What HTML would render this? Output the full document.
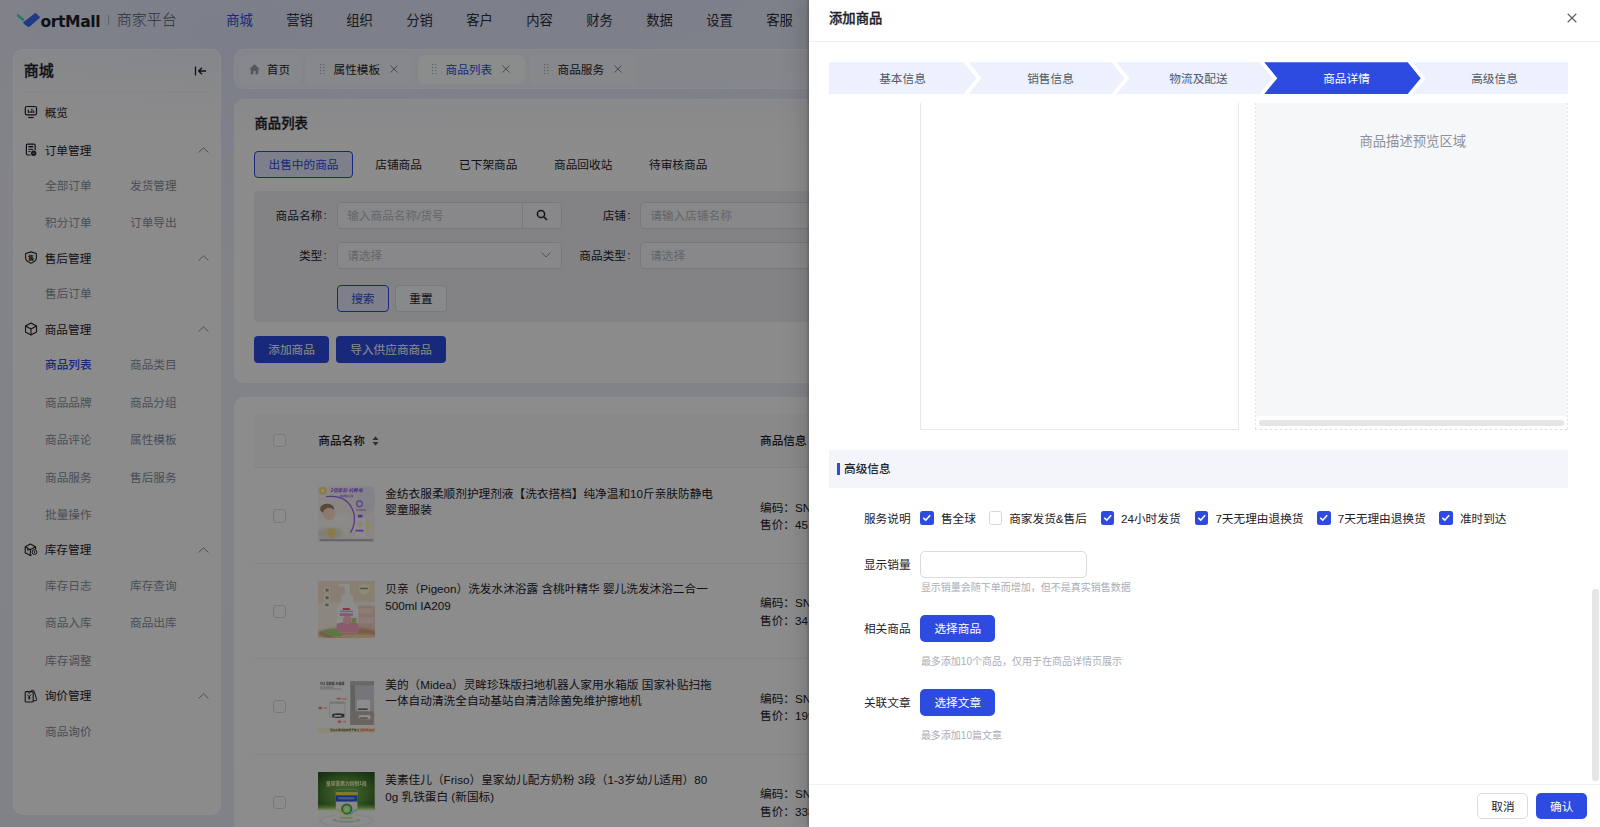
<!DOCTYPE html>
<html lang="zh-CN">
<head>
<meta charset="utf-8">
<title>添加商品</title>
<style>
*{box-sizing:border-box;margin:0;padding:0}
html,body{width:1600px;height:827px;overflow:hidden}
body{font-family:"Liberation Sans","Noto Sans CJK SC",sans-serif;font-size:11.67px;color:#1d2129;background:#eef0f9;position:relative}
.a{position:absolute}
.t{position:absolute;white-space:nowrap;font-size:11.67px;line-height:20px;color:#1d2129}
.app{position:absolute;left:0;top:0;width:1600px;height:827px;overflow:hidden;background:radial-gradient(ellipse 640px 160px at 540px 0px,rgba(224,230,252,.85) 0,rgba(224,230,252,.55) 55%,rgba(224,230,252,0) 100%),radial-gradient(ellipse 260px 220px at 225px 60px,rgba(226,230,252,.9) 0,rgba(226,230,252,0) 100%),linear-gradient(180deg,#eef0f9 0,#ecedf6 100%)}
.card{position:absolute;background:linear-gradient(180deg,rgba(255,255,255,.55) 0,rgba(255,255,255,.97) 85px);box-shadow:inset 0 0 0 1px rgba(255,255,255,.9);border-radius:10px}
.mh{font-weight:400}
.mi{color:#86909c}
.mi.on{color:#2d4be0;font-weight:500}
.tab{position:absolute;border-radius:6px;background:rgba(255,255,255,.35)}
.tab.on{background:rgba(255,255,255,.92)}
.inp{position:absolute;height:26.7px;border:1px solid #d9dce3;border-radius:4px;background:rgba(255,255,255,.55)}
.ph{color:#b4b9c3}
.btn{position:absolute;height:26.7px;border-radius:4px}
.btn.pri{background:#2d4be0}
.btn.gho{background:#e3e8fb;border:1px solid #2d4be0}
.btn.def{background:rgba(255,255,255,.6);border:1px solid #d9dce3}
.cb{position:absolute;width:13.3px;height:13.3px;border:1px solid #d9d9d9;border-radius:3.3px;background:#fff}
.rowline{position:absolute;left:254.4px;width:1340px;height:1px;background:#f0f0f0}
.pimg{position:absolute;left:318px;width:56.7px;height:56.7px;overflow:hidden}
.mask{position:absolute;left:0;top:0;width:1600px;height:827px;background:rgba(0,0,0,.45)}
.drawer{position:absolute;left:808.67px;top:0;width:791.33px;height:827px;background:#fff;box-shadow:-5px 0 13px rgba(0,0,0,.08),-2.5px 0 5px -3.3px rgba(0,0,0,.12),-7.5px 0 23px 6.7px rgba(0,0,0,.05),-2px 0 1.2px rgba(0,0,0,.1)}
.step{position:absolute;top:62.3px;height:31.7px;background:#edf0fd}
.step.on{background:#2d4be0}
.ck{position:absolute;width:13.33px;height:13.33px;border-radius:2.5px;background:#2d4be0}
.ck.off{background:#fff;border:1px solid #d3d6dd}
.ck svg{position:absolute;left:0;top:0}
.help{color:#a9aeb8;font-size:10px}
.dbtn{position:absolute;border-radius:5px;background:#2d4be0}
</style>
</head>
<body>
<div class="app">
<svg class="a" style="left:17.00px;top:10.00px" width="26" height="20" viewBox="0 0 26 20"><path d="M0.9 5.5L5.9 9.5" stroke="#48dcc6" stroke-width="2.6" stroke-linecap="round" fill="none"/><path d="M18.4 3.9L22.0 7.4L12.2 15.8Q11.6 16.2 10.9 15.8L7.2 12.7Z" fill="#3a6af5" stroke="#3a6af5" stroke-width="1.9" stroke-linejoin="round"/></svg>
<div class="t" style="top:11.10px;left:40.60px;line-height:22px;font-size:15.6px;font-weight:bold;font-family:'DejaVu Sans','Liberation Sans',sans-serif;letter-spacing:-0.45px;">ortMall</div>
<div class="a" style="left:108.00px;top:15.00px;width:1.00px;height:10.00px;background:#b0b5c0;"></div>
<div class="t" style="top:9.40px;left:116.70px;line-height:22px;font-size:15px;color:#4e5969;font-weight:300;">商家平台</div>
<div class="t" style="top:11.30px;left:209.50px;width:60.00px;text-align:center;font-size:13.33px;color:#2d4be0;">商城</div>
<div class="t" style="top:11.30px;left:269.50px;width:60.00px;text-align:center;font-size:13.33px;color:#2a2e37;">营销</div>
<div class="t" style="top:11.30px;left:329.50px;width:60.00px;text-align:center;font-size:13.33px;color:#2a2e37;">组织</div>
<div class="t" style="top:11.30px;left:389.50px;width:60.00px;text-align:center;font-size:13.33px;color:#2a2e37;">分销</div>
<div class="t" style="top:11.30px;left:449.50px;width:60.00px;text-align:center;font-size:13.33px;color:#2a2e37;">客户</div>
<div class="t" style="top:11.30px;left:509.50px;width:60.00px;text-align:center;font-size:13.33px;color:#2a2e37;">内容</div>
<div class="t" style="top:11.30px;left:569.50px;width:60.00px;text-align:center;font-size:13.33px;color:#2a2e37;">财务</div>
<div class="t" style="top:11.30px;left:629.50px;width:60.00px;text-align:center;font-size:13.33px;color:#2a2e37;">数据</div>
<div class="t" style="top:11.30px;left:689.50px;width:60.00px;text-align:center;font-size:13.33px;color:#2a2e37;">设置</div>
<div class="t" style="top:11.30px;left:749.50px;width:60.00px;text-align:center;font-size:13.33px;color:#2a2e37;">客服</div>
<div class="card" style="left:13.00px;top:49.00px;width:207.80px;height:766.00px;"></div>
<div class="t" style="top:59.80px;left:23.70px;line-height:22px;font-size:15px;font-weight:500;-webkit-text-stroke:0.3px currentColor;">商城</div>
<svg class="a" style="left:194.00px;top:64.50px" width="13" height="12" viewBox="0 0 13 12"><path d="M1.5 1.5V10.5" stroke="#1d2129" stroke-width="1.3" fill="none"/><path d="M12 6H5M8 2.8L4.6 6L8 9.2" stroke="#1d2129" stroke-width="1.3" fill="none" stroke-linejoin="round"/></svg>
<div class="a" style="left:22.00px;top:90.60px;width:190.00px;height:1.00px;background:rgba(0,0,0,.03);"></div>
<svg class="a" style="left:24.00px;top:105.30px" width="14" height="14" viewBox="0 0 14 14"><rect x="1.3" y="1.5" width="11.2" height="8.3" rx="1.6" fill="none" stroke="#1d2129" stroke-width="1.2"/><path d="M4.3 8V4.8M6.1 8V6.2M7.9 8V3.6M9.7 8V5.4" stroke="#1d2129" stroke-width="1.1" fill="none"/><path d="M4.3 12.5H9.7" stroke="#1d2129" stroke-width="1.2" fill="none"/></svg>
<div class="t mh" style="top:102.60px;left:44.70px;">概览</div>
<svg class="a" style="left:24.00px;top:143.20px" width="14" height="14" viewBox="0 0 14 14"><path d="M11.2 7V2.4Q11.2 1.2 10 1.2H3.6Q2.4 1.2 2.4 2.4V10.8Q2.4 12 3.6 12H6.6" fill="none" stroke="#1d2129" stroke-width="1.2"/><path d="M4.4 3.7H9.3" stroke="#1d2129" stroke-width="1.5"/><path d="M4.4 6.4H9.3M4.4 8.6H6.6" stroke="#1d2129" stroke-width="1"/><circle cx="9.7" cy="10.2" r="2.7" fill="#2a2e36"/><path d="M8.5 10.2H10.9" stroke="#b9bcc4" stroke-width="0.7"/></svg>
<div class="t mh" style="top:140.50px;left:44.70px;">订单管理</div>
<svg class="a" style="left:198.30px;top:147.20px" width="11" height="6" viewBox="0 0 11 6"><path d="M0.6 5.5L5.5 0.8L10.4 5.5" fill="none" stroke="#86909c" stroke-width="1"/></svg>
<div class="t mi" style="top:175.70px;left:45.00px;">全部订单</div>
<div class="t mi" style="top:175.70px;left:130.00px;">发货管理</div>
<div class="t mi" style="top:213.20px;left:45.00px;">积分订单</div>
<div class="t mi" style="top:213.20px;left:130.00px;">订单导出</div>
<svg class="a" style="left:24.00px;top:251.40px" width="14" height="14" viewBox="0 0 14 14"><path d="M7 0.9L12.4 2.5V7Q12.4 10.2 7 12.2Q1.6 10.2 1.6 7V2.5Z" fill="none" stroke="#1d2129" stroke-width="1.1" stroke-linejoin="round"/><text x="7" y="8.6" text-anchor="middle" font-size="6.2" font-weight="bold" fill="#1d2129" font-family="'Liberation Sans','Noto Sans CJK SC',sans-serif">售</text></svg>
<div class="t mh" style="top:248.70px;left:44.70px;">售后管理</div>
<svg class="a" style="left:198.30px;top:255.40px" width="11" height="6" viewBox="0 0 11 6"><path d="M0.6 5.5L5.5 0.8L10.4 5.5" fill="none" stroke="#86909c" stroke-width="1"/></svg>
<div class="t mi" style="top:284.30px;left:45.00px;">售后订单</div>
<svg class="a" style="left:24.00px;top:322.30px" width="14" height="14" viewBox="0 0 14 14"><path d="M7 0.9L12.5 3.9V9.9L7 12.9L1.5 9.9V3.9Z" fill="none" stroke="#1d2129" stroke-width="1.1" stroke-linejoin="round"/><path d="M1.5 3.9L7 6.9L12.5 3.9M7 6.9V12.9" fill="none" stroke="#1d2129" stroke-width="1.1" stroke-linejoin="round"/></svg>
<div class="t mh" style="top:319.60px;left:44.70px;">商品管理</div>
<svg class="a" style="left:198.30px;top:326.30px" width="11" height="6" viewBox="0 0 11 6"><path d="M0.6 5.5L5.5 0.8L10.4 5.5" fill="none" stroke="#86909c" stroke-width="1"/></svg>
<div class="t mi on" style="top:355.00px;left:45.00px;">商品列表</div>
<div class="t mi" style="top:355.00px;left:130.00px;">商品类目</div>
<div class="t mi" style="top:392.50px;left:45.00px;">商品品牌</div>
<div class="t mi" style="top:392.50px;left:130.00px;">商品分组</div>
<div class="t mi" style="top:430.00px;left:45.00px;">商品评论</div>
<div class="t mi" style="top:430.00px;left:130.00px;">属性模板</div>
<div class="t mi" style="top:467.50px;left:45.00px;">商品服务</div>
<div class="t mi" style="top:467.50px;left:130.00px;">售后服务</div>
<div class="t mi" style="top:505.00px;left:45.00px;">批量操作</div>
<svg class="a" style="left:24.00px;top:543.10px" width="14" height="14" viewBox="0 0 14 14"><path d="M11.6 6.2V3.8L6.3 0.9L1.2 3.8V9.7L6.3 12.6L7.6 11.9" fill="none" stroke="#1d2129" stroke-width="1.1" stroke-linejoin="round"/><path d="M1.2 3.8L6.3 6.7L11.6 3.8M6.3 6.7V12.6M3 6.4L4.6 7.3" fill="none" stroke="#1d2129" stroke-width="1.1" stroke-linejoin="round"/><circle cx="10.5" cy="9.1" r="2.4" fill="none" stroke="#1d2129" stroke-width="1"/><path d="M10.5 7.9V10.3" stroke="#1d2129" stroke-width="0.9"/></svg>
<div class="t mh" style="top:540.40px;left:44.70px;">库存管理</div>
<svg class="a" style="left:198.30px;top:547.10px" width="11" height="6" viewBox="0 0 11 6"><path d="M0.6 5.5L5.5 0.8L10.4 5.5" fill="none" stroke="#86909c" stroke-width="1"/></svg>
<div class="t mi" style="top:575.80px;left:45.00px;">库存日志</div>
<div class="t mi" style="top:575.80px;left:130.00px;">库存查询</div>
<div class="t mi" style="top:613.30px;left:45.00px;">商品入库</div>
<div class="t mi" style="top:613.30px;left:130.00px;">商品出库</div>
<div class="t mi" style="top:650.80px;left:45.00px;">库存调整</div>
<svg class="a" style="left:24.00px;top:688.90px" width="14" height="14" viewBox="0 0 14 14"><path d="M2.2 2.6H8.2Q9.2 2.6 9.2 3.6V12Q9.2 13 8.2 13H2.2Q1.2 13 1.2 12V3.6Q1.2 2.6 2.2 2.6Z" fill="none" stroke="#1d2129" stroke-width="1.1"/><path d="M6.6 2.2Q7.4 1 9 1.2Q10 1.4 10.3 2.6L12.7 10.6Q12.9 11.6 11.9 11.7H9.4" fill="none" stroke="#1d2129" stroke-width="1"/><path d="M3.4 5.6L5.2 7.8L7 5.6M5.2 7.8V10.8M3.8 8.9H6.6" fill="none" stroke="#1d2129" stroke-width="1"/><path d="M4 3.6Q5.2 5 6.4 3.6" fill="none" stroke="#1d2129" stroke-width="0.9"/></svg>
<div class="t mh" style="top:686.20px;left:44.70px;">询价管理</div>
<svg class="a" style="left:198.30px;top:692.90px" width="11" height="6" viewBox="0 0 11 6"><path d="M0.6 5.5L5.5 0.8L10.4 5.5" fill="none" stroke="#86909c" stroke-width="1"/></svg>
<div class="t mi" style="top:721.60px;left:45.00px;">商品询价</div>
<div class="card" style="left:233.50px;top:49.00px;width:1353.50px;height:39.80px;background:rgba(255,255,255,.5);box-shadow:inset 0 0 0 1px rgba(255,255,255,.55);"></div>
<div class="tab" style="left:239.00px;top:55.40px;width:62.00px;height:28.20px;"></div>
<svg class="a" style="left:249.30px;top:64.30px" width="11" height="10.5" viewBox="0 0 11 10.5"><path d="M5.5 0.2L0.2 5.2H1.7V10.3H4.4V6.9H6.6V10.3H9.3V5.2H10.8Z" fill="#9a9ea8"/></svg>
<div class="t" style="top:59.80px;left:266.80px;">首页</div>
<div class="tab" style="left:306.00px;top:55.40px;width:106.50px;height:28.20px;"></div>
<svg class="a" style="left:319.70px;top:64.00px" width="5" height="11" viewBox="0 0 5 11"><rect x="0.0" y="0.0" width="1.1" height="1.1" fill="#a0a5b0"/><rect x="3.2" y="0.0" width="1.1" height="1.1" fill="#a0a5b0"/><rect x="0.0" y="3.0" width="1.1" height="1.1" fill="#a0a5b0"/><rect x="3.2" y="3.0" width="1.1" height="1.1" fill="#a0a5b0"/><rect x="0.0" y="6.0" width="1.1" height="1.1" fill="#a0a5b0"/><rect x="3.2" y="6.0" width="1.1" height="1.1" fill="#a0a5b0"/><rect x="0.0" y="9.0" width="1.1" height="1.1" fill="#a0a5b0"/><rect x="3.2" y="9.0" width="1.1" height="1.1" fill="#a0a5b0"/></svg>
<div class="t" style="top:59.80px;left:333.50px;">属性模板</div>
<svg class="a" style="left:390.40px;top:65.30px" width="8" height="8" viewBox="0 0 8 8"><path d="M0.4 0.4L7.6 7.6M7.6 0.4L0.4 7.6" stroke="#7a808c" stroke-width="0.9"/></svg>
<div class="tab on" style="left:418.00px;top:55.40px;width:106.50px;height:28.20px;"></div>
<svg class="a" style="left:431.70px;top:64.00px" width="5" height="11" viewBox="0 0 5 11"><rect x="0.0" y="0.0" width="1.1" height="1.1" fill="#a0a5b0"/><rect x="3.2" y="0.0" width="1.1" height="1.1" fill="#a0a5b0"/><rect x="0.0" y="3.0" width="1.1" height="1.1" fill="#a0a5b0"/><rect x="3.2" y="3.0" width="1.1" height="1.1" fill="#a0a5b0"/><rect x="0.0" y="6.0" width="1.1" height="1.1" fill="#a0a5b0"/><rect x="3.2" y="6.0" width="1.1" height="1.1" fill="#a0a5b0"/><rect x="0.0" y="9.0" width="1.1" height="1.1" fill="#a0a5b0"/><rect x="3.2" y="9.0" width="1.1" height="1.1" fill="#a0a5b0"/></svg>
<div class="t" style="top:59.80px;left:445.50px;color:#2d4be0;">商品列表</div>
<svg class="a" style="left:502.40px;top:65.30px" width="8" height="8" viewBox="0 0 8 8"><path d="M0.4 0.4L7.6 7.6M7.6 0.4L0.4 7.6" stroke="#7a808c" stroke-width="0.9"/></svg>
<div class="tab" style="left:530.00px;top:55.40px;width:106.50px;height:28.20px;"></div>
<svg class="a" style="left:543.70px;top:64.00px" width="5" height="11" viewBox="0 0 5 11"><rect x="0.0" y="0.0" width="1.1" height="1.1" fill="#a0a5b0"/><rect x="3.2" y="0.0" width="1.1" height="1.1" fill="#a0a5b0"/><rect x="0.0" y="3.0" width="1.1" height="1.1" fill="#a0a5b0"/><rect x="3.2" y="3.0" width="1.1" height="1.1" fill="#a0a5b0"/><rect x="0.0" y="6.0" width="1.1" height="1.1" fill="#a0a5b0"/><rect x="3.2" y="6.0" width="1.1" height="1.1" fill="#a0a5b0"/><rect x="0.0" y="9.0" width="1.1" height="1.1" fill="#a0a5b0"/><rect x="3.2" y="9.0" width="1.1" height="1.1" fill="#a0a5b0"/></svg>
<div class="t" style="top:59.80px;left:557.50px;">商品服务</div>
<svg class="a" style="left:614.40px;top:65.30px" width="8" height="8" viewBox="0 0 8 8"><path d="M0.4 0.4L7.6 7.6M7.6 0.4L0.4 7.6" stroke="#7a808c" stroke-width="0.9"/></svg>
<div class="card" style="left:233.50px;top:99.00px;width:1353.50px;height:284.30px;background:linear-gradient(180deg,rgba(255,255,255,.7) 0,rgba(255,255,255,.98) 45px);"></div>
<div class="t" style="top:114.00px;left:254.50px;font-size:13.33px;font-weight:500;-webkit-text-stroke:0.3px currentColor;">商品列表</div>
<div class="a" style="left:254.00px;top:151.00px;width:99.00px;height:26.60px;border:1px solid #2d4be0;border-radius:4px;background:#e3e8fb;"></div>
<div class="t" style="top:154.60px;left:203.50px;width:200.00px;text-align:center;color:#2d4be0;">出售中的商品</div>
<div class="t" style="top:154.60px;left:375.30px;">店铺商品</div>
<div class="t" style="top:154.60px;left:459.10px;">已下架商品</div>
<div class="t" style="top:154.60px;left:554.00px;">商品回收站</div>
<div class="t" style="top:154.60px;left:649.00px;">待审核商品</div>
<div class="a" style="left:254.40px;top:191.00px;width:1340.00px;height:131.30px;background:rgba(232,234,242,.75);border-radius:4px;"></div>
<div class="t" style="top:205.50px;left:127.80px;width:200.00px;text-align:right;">商品名称<span style="display:inline-block;width:5.6px;text-align:center;position:relative;top:-0.5px">:</span></div>
<div class="inp" style="left:337.00px;top:202.00px;width:186.00px;height:26.70px;border-radius:4px 0 0 4px;"></div>
<div class="t ph" style="top:205.50px;left:347.20px;">输入商品名称/货号</div>
<div class="inp" style="left:522.00px;top:202.00px;width:39.60px;height:26.70px;border-radius:0 4px 4px 0;"></div>
<svg class="a" style="left:535.50px;top:208.70px" width="12" height="12" viewBox="0 0 12 12"><circle cx="5" cy="5" r="3.6" fill="none" stroke="#1d2129" stroke-width="1.5"/><path d="M7.8 7.8L11 11" stroke="#1d2129" stroke-width="1.6"/></svg>
<div class="t" style="top:205.50px;left:431.60px;width:200.00px;text-align:right;">店铺<span style="display:inline-block;width:5.6px;text-align:center;position:relative;top:-0.5px">:</span></div>
<div class="inp" style="left:640.40px;top:202.20px;width:400.00px;height:26.50px;"></div>
<div class="t ph" style="top:205.50px;left:650.20px;">请输入店铺名称</div>
<div class="t" style="top:245.50px;left:127.80px;width:200.00px;text-align:right;">类型<span style="display:inline-block;width:5.6px;text-align:center;position:relative;top:-0.5px">:</span></div>
<div class="inp" style="left:337.00px;top:242.00px;width:224.60px;height:26.70px;"></div>
<div class="t ph" style="top:245.50px;left:347.20px;">请选择</div>
<svg class="a" style="left:541.00px;top:252.30px" width="10" height="6" viewBox="0 0 10 6"><path d="M0.7 0.7L5 5L9.3 0.7" fill="none" stroke="#86909c" stroke-width="1"/></svg>
<div class="t" style="top:245.50px;left:431.60px;width:200.00px;text-align:right;">商品类型<span style="display:inline-block;width:5.6px;text-align:center;position:relative;top:-0.5px">:</span></div>
<div class="inp" style="left:640.40px;top:242.20px;width:400.00px;height:26.50px;"></div>
<div class="t ph" style="top:245.50px;left:650.20px;">请选择</div>
<div class="btn gho" style="left:337.00px;top:285.00px;width:51.60px;height:26.70px;"></div>
<div class="t" style="top:288.70px;left:262.80px;width:200.00px;text-align:center;color:#2d4be0;">搜索</div>
<div class="btn def" style="left:395.40px;top:285.00px;width:51.20px;height:26.70px;"></div>
<div class="t" style="top:288.70px;left:321.00px;width:200.00px;text-align:center;">重置</div>
<div class="btn pri" style="left:254.00px;top:336.00px;width:75.30px;height:26.70px;"></div>
<div class="t" style="top:339.70px;left:191.60px;width:200.00px;text-align:center;color:#fff;">添加商品</div>
<div class="btn pri" style="left:336.00px;top:336.00px;width:110.20px;height:26.70px;"></div>
<div class="t" style="top:339.70px;left:291.10px;width:200.00px;text-align:center;color:#fff;">导入供应商商品</div>
<div class="card" style="left:233.50px;top:397.00px;width:1353.50px;height:460.00px;background:rgba(255,255,255,.98);"></div>
<div class="a" style="left:254.40px;top:414.40px;width:1340.00px;height:53.40px;background:#fafafa;border-bottom:1px solid #f0f0f0;"></div>
<div class="cb" style="left:273.00px;top:434.20px;width:13.30px;height:13.30px;"></div>
<div class="t" style="top:431.30px;left:318.30px;font-weight:500;">商品名称</div>
<svg class="a" style="left:372.30px;top:436.30px" width="7" height="10" viewBox="0 0 7 10"><path d="M3.5 0.3L6.6 4H0.4Z" fill="#4e5969"/><path d="M3.5 9.7L6.6 6H0.4Z" fill="#4e5969"/></svg>
<div class="t" style="top:431.30px;left:760.00px;font-weight:500;">商品信息</div>
<div class="cb" style="left:273.00px;top:509.40px;width:13.30px;height:13.30px;"></div>
<div class="pimg" style="top:485.60px"><svg width="56.7" height="56.7" viewBox="0 0 56 56" preserveAspectRatio="none"><defs><filter id="bl" x="-5%" y="-5%" width="110%" height="110%"><feGaussianBlur stdDeviation="0.45"/></filter><filter id="bl2" x="-10%" y="-10%" width="120%" height="120%"><feGaussianBlur stdDeviation="1.2"/></filter></defs><rect width="56" height="56" fill="#f9f4f2"/><g filter="url(#bl2)"><ellipse cx="47" cy="14" rx="10" ry="14" fill="#f2ebf9"/><ellipse cx="20" cy="38" rx="20" ry="12" fill="#fffbf4"/><ellipse cx="12" cy="47" rx="13" ry="6" fill="#ece5da"/></g><g filter="url(#bl)"><path d="M8 10.5Q30 8 35.5 27Q37.5 38 32 46" fill="none" stroke="#9c66f7" stroke-width="1.25"/><ellipse cx="9" cy="22.5" rx="7" ry="5" fill="#a78369"/><ellipse cx="11" cy="27.5" rx="6.2" ry="6" fill="#ffdecc"/><ellipse cx="22" cy="33" rx="6" ry="3" fill="#ffffff"/><circle cx="4.8" cy="4.6" r="3.6" fill="#ffda64"/><circle cx="4.8" cy="4.6" r="2" fill="#ffffc8"/><path d="M10.5 43l2.5-1.6 1.8 1.6 2.4-0.8-0.8 3.2 2.4 1.6-3.2 0.8 0.8 4-2.4-1.6-2.4 2.4 0-4-2.4-1.6z" fill="#ffde7f"/><circle cx="41" cy="17.5" r="2.8" fill="none" stroke="#9c78ff" stroke-width="1.2"/><rect x="37.5" y="23" width="10" height="1.3" fill="#b6a4ec"/><rect x="39.5" y="28.5" width="4.5" height="3" rx="0.8" fill="#915bff"/><rect x="37" y="31" width="10" height="19.5" rx="2.6" fill="#ffffff"/><rect x="37" y="43.2" width="8" height="1.8" fill="#a46dff"/><ellipse cx="41.5" cy="37.5" rx="3" ry="3.4" fill="#fff5da"/><path d="M47.5 37l4-1.6-1.6 3.2 3.2 0-3.2 2.4 2.4 2.4-4.8-0.8z" fill="#fff7a4"/><rect x="1.5" y="52.4" width="53" height="2.2" fill="#bdb9c4"/></g><text x="12.5" y="6.3" font-size="4.6" font-weight="bold" font-style="italic" fill="#9152ff" filter="url(#bl)" font-family="'Liberation Sans','Noto Sans CJK SC',sans-serif">2倍柔软·抗静电</text><text x="22" y="10.8" font-size="2.6" font-weight="bold" fill="#a46dff" filter="url(#bl)" font-family="'Liberation Sans','Noto Sans CJK SC',sans-serif">敏感肌适用</text></svg></div>
<div class="t" style="top:484.00px;left:385.30px;">金纺衣服柔顺剂护理剂液【洗衣搭档】纯净温和10斤亲肤防静电</div>
<div class="t" style="top:500.40px;left:385.30px;">婴童服装</div>
<div class="t" style="top:497.80px;left:760.00px;">编码：SN8856201</div>
<div class="t" style="top:515.30px;left:760.00px;">售价：45.90</div>
<div class="rowline" style="left:254.40px;top:562.70px;width:1340.00px;height:1.00px;"></div>
<div class="cb" style="left:273.00px;top:604.80px;width:13.30px;height:13.30px;"></div>
<div class="pimg" style="top:581.00px"><svg width="56.7" height="56.7" viewBox="0 0 56 56" preserveAspectRatio="none"><defs><filter id="bl" x="-5%" y="-5%" width="110%" height="110%"><feGaussianBlur stdDeviation="0.45"/></filter><filter id="bl2" x="-10%" y="-10%" width="120%" height="120%"><feGaussianBlur stdDeviation="1.2"/></filter></defs><rect width="56" height="56" fill="#f7e7cf"/><g filter="url(#bl2)"><rect x="-2" y="21" width="30" height="27" fill="#fdf5e9"/><rect x="38" y="21" width="20" height="6" fill="#ffffff"/><rect x="39" y="24" width="19" height="27" fill="#f4d3c4"/><ellipse cx="30" cy="52" rx="30" ry="6" fill="#d7a783"/><ellipse cx="36" cy="54.5" rx="22" ry="2.5" fill="#ffd7a7"/></g><g filter="url(#bl)"><path d="M40 27h14v5h-14zM41 36h14v6h-14z" fill="#ffe1d7"/><rect x="20.5" y="3" width="11.5" height="2.4" rx="1" fill="#ffffff"/><rect x="26.5" y="4" width="5" height="12" fill="#ffffff"/><path d="M24.5 14h9.5q1 0 1 1v6q5 3 5 9v19q0 2-2 2h-17.5q-2 0-2-2v-19q0-6 4.5-9v-6q0-1 1-1z" fill="#ffffff"/><path d="M18.5 42q10.5-3 21.5 0v7q0 2-2 2h-17.5q-2 0-2-2z" fill="#ffa7c4"/><circle cx="29" cy="38.5" r="4.4" fill="#ffbdc1"/><rect x="24.5" y="26.8" width="7" height="1.8" fill="#ff5252"/><rect x="21.5" y="29.3" width="13" height="1.3" fill="#a4c8ff"/><rect x="21.5" y="32" width="13" height="2.4" fill="#ff91c8"/><rect x="33.5" y="36.5" width="4.5" height="5" fill="#b6da7f"/><path d="M4.5 51q8-5 15-2l5 5q-10 2-20-3z" fill="#a0de71"/><circle cx="45.5" cy="8" r="5.6" fill="#fff7c4"/><circle cx="45.5" cy="8" r="4.2" fill="#ffffe5"/><rect x="41.8" y="6.6" width="7.4" height="1.6" fill="#a4917f"/><circle cx="8.8" cy="9" r="3.3" fill="#fffbe9"/><circle cx="8.8" cy="16.5" r="3.3" fill="#fffbe9"/><circle cx="8.8" cy="23.5" r="3.3" fill="#fffff0"/><rect x="7.5" y="7.6" width="3" height="2.8" fill="#9c997f"/><rect x="7.5" y="15.1" width="3" height="2.8" fill="#9c997f"/><rect x="7.2" y="22.3" width="3.4" height="2.6" fill="#a4a491"/></g></svg></div>
<div class="t" style="top:579.40px;left:385.30px;">贝亲（Pigeon）洗发水沐浴露 含桃叶精华 婴儿洗发沐浴二合一</div>
<div class="t" style="top:595.80px;left:385.30px;">500ml IA209</div>
<div class="t" style="top:593.20px;left:760.00px;">编码：SN8856202</div>
<div class="t" style="top:610.70px;left:760.00px;">售价：34.50</div>
<div class="rowline" style="left:254.40px;top:658.10px;width:1340.00px;height:1.00px;"></div>
<div class="cb" style="left:273.00px;top:700.20px;width:13.30px;height:13.30px;"></div>
<div class="pimg" style="top:676.40px"><svg width="56.7" height="56.7" viewBox="0 0 56 56" preserveAspectRatio="none"><defs><filter id="bl" x="-5%" y="-5%" width="110%" height="110%"><feGaussianBlur stdDeviation="0.45"/></filter><filter id="bl2" x="-10%" y="-10%" width="120%" height="120%"><feGaussianBlur stdDeviation="1.2"/></filter></defs><rect width="56" height="56" fill="#ffffff"/><g filter="url(#bl)"><rect x="32" y="5.2" width="23.4" height="43" fill="#d7d8de"/><rect x="32" y="5.2" width="4.6" height="43" fill="#b2b2b2"/><rect x="32" y="5.2" width="23.4" height="4" fill="#bdbdbd"/><path d="M32 35h23.4v13.2h-23.4z" fill="#c4b6ab"/><rect x="38.5" y="23.5" width="13" height="11" rx="1.5" fill="#ffffff"/><rect x="39.5" y="32" width="9.5" height="1.6" fill="#6d6d71"/><rect x="40" y="38.5" width="12" height="4.2" rx="1.8" fill="#ffffff"/><rect x="41" y="41" width="8" height="1.2" fill="#7f7f7f"/><rect x="11.5" y="25.5" width="15" height="15.5" rx="1" fill="#ffffff" stroke="#cccccf" stroke-width="0.6"/><rect x="11.8" y="25.6" width="14.4" height="1.8" fill="#d3d3d7"/><path d="M14 37.5q6-1.5 12 0v3q-6 2-12 0z" fill="#57575b"/><rect x="16" y="38.6" width="7" height="1.6" fill="#ffffff"/><rect x="18.5" y="21.5" width="4" height="1.6" fill="#ff7f7f"/><rect x="23.5" y="22" width="5" height="1.2" fill="#ffa4a4"/><rect x="0.6" y="30.5" width="3.4" height="2.4" fill="#ff7f7f"/><rect x="5.5" y="30.8" width="3.6" height="1.6" fill="#ffb6b6"/><rect x="19.5" y="44" width="3.4" height="2.2" fill="#ff7f7f"/><rect x="24.5" y="44.2" width="3.6" height="1.6" fill="#ffb6b6"/><rect x="2" y="10.5" width="13.5" height="0.9" fill="#b6b6b6"/><rect x="2" y="12.3" width="21" height="0.9" fill="#c4c4c4"/><rect x="0" y="51.2" width="56" height="4.8" fill="#fff7d3"/></g><text x="2" y="8.6" font-size="2.9" font-weight="bold" fill="#494949" font-family="'Liberation Sans','Noto Sans CJK SC',sans-serif" filter="url(#bl)">V12 灵眸版 水箱版</text><text x="11.5" y="54.7" font-size="2.7" font-weight="bold" fill="#524940" font-family="'Liberation Sans','Noto Sans CJK SC',sans-serif" filter="url(#bl)">全自动清洗拖布烘干集尘<tspan fill="#ff5240"> 国家补贴到手</tspan></text></svg></div>
<div class="t" style="top:674.80px;left:385.30px;">美的（Midea）灵眸珍珠版扫地机器人家用水箱版 国家补贴扫拖</div>
<div class="t" style="top:691.20px;left:385.30px;">一体自动清洗全自动基站自清洁除菌免维护擦地机</div>
<div class="t" style="top:688.60px;left:760.00px;">编码：SN8856203</div>
<div class="t" style="top:706.10px;left:760.00px;">售价：1999.00</div>
<div class="rowline" style="left:254.40px;top:753.50px;width:1340.00px;height:1.00px;"></div>
<div class="cb" style="left:273.00px;top:795.60px;width:13.30px;height:13.30px;"></div>
<div class="pimg" style="top:771.80px"><svg width="56.7" height="56.7" viewBox="0 0 56 56" preserveAspectRatio="none"><defs><filter id="bl" x="-5%" y="-5%" width="110%" height="110%"><feGaussianBlur stdDeviation="0.45"/></filter><filter id="bl2" x="-10%" y="-10%" width="120%" height="120%"><feGaussianBlur stdDeviation="1.2"/></filter></defs><defs><radialGradient id="gg" cx="50%" cy="55%" r="65%"><stop offset="0" stop-color="#83b657"/><stop offset="0.55" stop-color="#57913e"/><stop offset="1" stop-color="#2f5b24"/></radialGradient><linearGradient id="gl" x1="0" y1="0" x2="0" y2="1"><stop offset="0" stop-color="#6db649" stop-opacity="0"/><stop offset="1" stop-color="#e9ffa4"/></linearGradient></defs><rect width="56" height="56" fill="#fbffff"/><rect width="56" height="37.6" fill="url(#gg)"/><rect y="31" width="56" height="6.6" fill="url(#gl)"/><g filter="url(#bl)"><ellipse cx="28" cy="48" rx="27" ry="6.5" fill="#f0f4f4"/><ellipse cx="28" cy="48" rx="24" ry="5" fill="#ffffff"/><ellipse cx="28" cy="47.5" rx="14" ry="2.6" fill="#dadede"/><rect x="17.6" y="17.2" width="21.4" height="31" rx="1.2" fill="#fbfbf0"/><rect x="17.6" y="17.2" width="21.4" height="3" rx="1" fill="#50af57"/><rect x="17.6" y="20" width="21.4" height="3.2" fill="#ffda50"/><rect x="17.6" y="23" width="21.4" height="6.2" fill="#2f5be9"/><rect x="20" y="25" width="16" height="2" fill="#7fadff"/><circle cx="28.4" cy="36.6" r="5.6" fill="#50b650"/><circle cx="28.4" cy="36.6" r="3.6" fill="#c8ffa4"/><circle cx="28.4" cy="36.6" r="1.6" fill="#ffecda"/><path d="M17.6 36q5 1 8 5l-1 1q-3-4-7-4.5z" fill="#ecff6d"/><path d="M39 36q-5 2-8 6l1 1q3-4 7-5.4z" fill="#91daff"/><rect x="22" y="44.4" width="12" height="1.6" fill="#b6eca4"/></g><text x="28" y="13.2" text-anchor="middle" font-size="4.7" font-weight="bold" fill="#ffffb6" font-family="'Liberation Sans','Noto Sans CJK SC',sans-serif" filter="url(#bl)">皇家美素力同悦1段</text></svg></div>
<div class="t" style="top:770.20px;left:385.30px;">美素佳儿（Friso）皇家幼儿配方奶粉 3段（1-3岁幼儿适用）80</div>
<div class="t" style="top:786.60px;left:385.30px;">0g 乳铁蛋白 (新国标)</div>
<div class="t" style="top:784.00px;left:760.00px;">编码：SN8856204</div>
<div class="t" style="top:801.50px;left:760.00px;">售价：338.00</div>
<div class="rowline" style="left:254.40px;top:848.90px;width:1340.00px;height:1.00px;"></div>
</div>
<div class="mask"></div>
<div class="drawer">
<div class="t" style="top:9.20px;left:20.33px;font-size:13.33px;font-weight:500;-webkit-text-stroke:0.3px currentColor;">添加商品</div>
<svg class="a" style="left:757.93px;top:13.40px" width="10" height="10" viewBox="0 0 10 10"><path d="M0.7 0.7L9.3 9.3M9.3 0.7L0.7 9.3" stroke="#636363" stroke-width="1.25"/></svg>
<div class="a" style="left:0.00px;top:41.30px;width:791.33px;height:1.20px;background:#f0f0f0;"></div>
<div class="a" style="left:0;top:102.50px;width:791.33px;height:681.50px;overflow:hidden">
<div class="a" style="left:111.63px;top:-20.00px;width:319.00px;height:347.30px;border:1px solid #e8e9ec;background:#fff;"></div>
<div class="a" style="left:447.83px;top:-20.00px;width:310.70px;height:346.30px;background:#fff;"><div class="a" style="left:0;right:0;top:0;height:333.80px;background:#f6f7f9"></div><div class="a" style="left:2.8px;right:3.5px;top:337.50px;height:6.4px;border-radius:3.2px;background:#e5e5e6"></div><div class="a" style="left:-1px;top:0;width:1px;bottom:0;background:repeating-linear-gradient(180deg,#e4e5ea 0,#e4e5ea 2px,rgba(255,255,255,0) 2px,rgba(255,255,255,0) 4px)"></div><div class="a" style="right:-1px;top:0;width:1px;bottom:0;background:repeating-linear-gradient(180deg,#e4e5ea 0,#e4e5ea 2px,rgba(255,255,255,0) 2px,rgba(255,255,255,0) 4px)"></div><div class="a" style="left:-1px;right:-1px;bottom:-1px;height:1px;background:repeating-linear-gradient(90deg,#dadbe0 0,#dadbe0 2.5px,rgba(255,255,255,0) 2.5px,rgba(255,255,255,0) 5px)"></div></div>
<div class="t" style="top:29.40px;left:454.13px;width:300.00px;text-align:center;font-size:13.33px;color:#8b909a;">商品描述预览区域</div>
<div class="a" style="left:20.33px;top:347.50px;width:739.10px;height:37.50px;background:#f4f5fa;"></div>
<div class="a" style="left:28.63px;top:360.00px;width:2.50px;height:12.50px;background:#2d4be0;"></div>
<div class="t" style="top:356.50px;left:35.33px;font-weight:500;">高级信息</div>
<div class="t" style="top:406.10px;left:-98.07px;width:200.00px;text-align:right;">服务说明</div>
<div class="ck" style="left:111.83px;top:408.80px;width:13.33px;height:13.33px;"><svg width="13.33" height="13.33" viewBox="0 0 16 16"><path d="M4 8.2L7 11L12.2 5.2" fill="none" stroke="#fff" stroke-width="1.9"/></svg></div>
<div class="t" style="top:406.10px;left:132.23px;">售全球</div>
<div class="ck off" style="left:180.13px;top:408.80px;width:13.33px;height:13.33px;"></div>
<div class="t" style="top:406.10px;left:200.53px;">商家发货&amp;售后</div>
<div class="ck" style="left:291.93px;top:408.80px;width:13.33px;height:13.33px;"><svg width="13.33" height="13.33" viewBox="0 0 16 16"><path d="M4 8.2L7 11L12.2 5.2" fill="none" stroke="#fff" stroke-width="1.9"/></svg></div>
<div class="t" style="top:406.10px;left:312.33px;">24小时发货</div>
<div class="ck" style="left:386.33px;top:408.80px;width:13.33px;height:13.33px;"><svg width="13.33" height="13.33" viewBox="0 0 16 16"><path d="M4 8.2L7 11L12.2 5.2" fill="none" stroke="#fff" stroke-width="1.9"/></svg></div>
<div class="t" style="top:406.10px;left:406.73px;">7天无理由退换货</div>
<div class="ck" style="left:508.63px;top:408.80px;width:13.33px;height:13.33px;"><svg width="13.33" height="13.33" viewBox="0 0 16 16"><path d="M4 8.2L7 11L12.2 5.2" fill="none" stroke="#fff" stroke-width="1.9"/></svg></div>
<div class="t" style="top:406.10px;left:529.03px;">7天无理由退换货</div>
<div class="ck" style="left:630.83px;top:408.80px;width:13.33px;height:13.33px;"><svg width="13.33" height="13.33" viewBox="0 0 16 16"><path d="M4 8.2L7 11L12.2 5.2" fill="none" stroke="#fff" stroke-width="1.9"/></svg></div>
<div class="t" style="top:406.10px;left:651.23px;">准时到达</div>
<div class="t" style="top:452.50px;left:-98.07px;width:200.00px;text-align:right;">显示销量</div>
<div class="a" style="left:111.73px;top:448.80px;width:166.60px;height:26.60px;border:1px solid #d9dbe0;border-radius:5px;background:#fff;"></div>
<div class="t help" style="top:478.55px;left:112.23px;line-height:14px;">显示销量会随下单而增加，但不是真实销售数据</div>
<div class="t" style="top:516.50px;left:-98.07px;width:200.00px;text-align:right;">相关商品</div>
<div class="dbtn" style="left:111.83px;top:512.70px;width:74.60px;height:26.70px;"></div>
<div class="t" style="top:516.40px;left:49.13px;width:200.00px;text-align:center;color:#fff;">选择商品</div>
<div class="t help" style="top:552.00px;left:112.23px;line-height:14px;">最多添加10个商品，仅用于在商品详情页展示</div>
<div class="t" style="top:590.60px;left:-98.07px;width:200.00px;text-align:right;">关联文章</div>
<div class="dbtn" style="left:111.83px;top:586.80px;width:74.60px;height:26.70px;"></div>
<div class="t" style="top:590.50px;left:49.13px;width:200.00px;text-align:center;color:#fff;">选择文章</div>
<div class="t help" style="top:626.10px;left:112.23px;line-height:14px;">最多添加10篇文章</div>
</div>
<div class="step" style="left:20.33px;top:62.30px;width:147.50px;height:31.70px;clip-path:polygon(0 0,134.50px 0,100% 50%,134.50px 100%,0 100%);"></div>
<div class="t" style="top:68.60px;left:-6.17px;width:200.00px;text-align:center;color:#4e5969;">基本信息</div>
<div class="step" style="left:159.93px;top:62.30px;width:155.90px;height:31.70px;clip-path:polygon(0 0,142.90px 0,100% 50%,142.90px 100%,0 100%,13px 50%);"></div>
<div class="t" style="top:68.60px;left:141.83px;width:200.00px;text-align:center;color:#4e5969;">销售信息</div>
<div class="step" style="left:307.83px;top:62.30px;width:156.10px;height:31.70px;clip-path:polygon(0 0,143.10px 0,100% 50%,143.10px 100%,0 100%,13px 50%);"></div>
<div class="t" style="top:68.60px;left:289.83px;width:200.00px;text-align:center;color:#4e5969;">物流及配送</div>
<div class="step on" style="left:455.63px;top:62.30px;width:156.40px;height:31.70px;clip-path:polygon(0 0,143.40px 0,100% 50%,143.40px 100%,0 100%,13px 50%);"></div>
<div class="t" style="top:68.60px;left:437.83px;width:200.00px;text-align:center;color:#fff;">商品详情</div>
<div class="step" style="left:603.83px;top:62.30px;width:155.60px;height:31.70px;clip-path:polygon(0 0,100% 0,100% 100%,0 100%,13px 50%);"></div>
<div class="t" style="top:68.60px;left:585.83px;width:200.00px;text-align:center;color:#4e5969;">高级信息</div>
<div class="a" style="left:0.00px;top:783.60px;width:791.33px;height:1.20px;background:#f0f0f0;"></div>
<div class="a" style="left:668.83px;top:792.60px;width:51.00px;height:26.90px;border:1px solid #d9dbe0;border-radius:5px;background:#fff;"></div>
<div class="t" style="top:796.90px;left:594.33px;width:200.00px;text-align:center;">取消</div>
<div class="dbtn" style="left:727.33px;top:792.60px;width:51.50px;height:26.70px;"></div>
<div class="t" style="top:796.90px;left:653.13px;width:200.00px;text-align:center;color:#fff;">确认</div>
<div class="a" style="left:783.53px;top:589.00px;width:6.50px;height:192.00px;border-radius:3.3px;background:#e5e6e8;"></div>
</div>
</body>
</html>
